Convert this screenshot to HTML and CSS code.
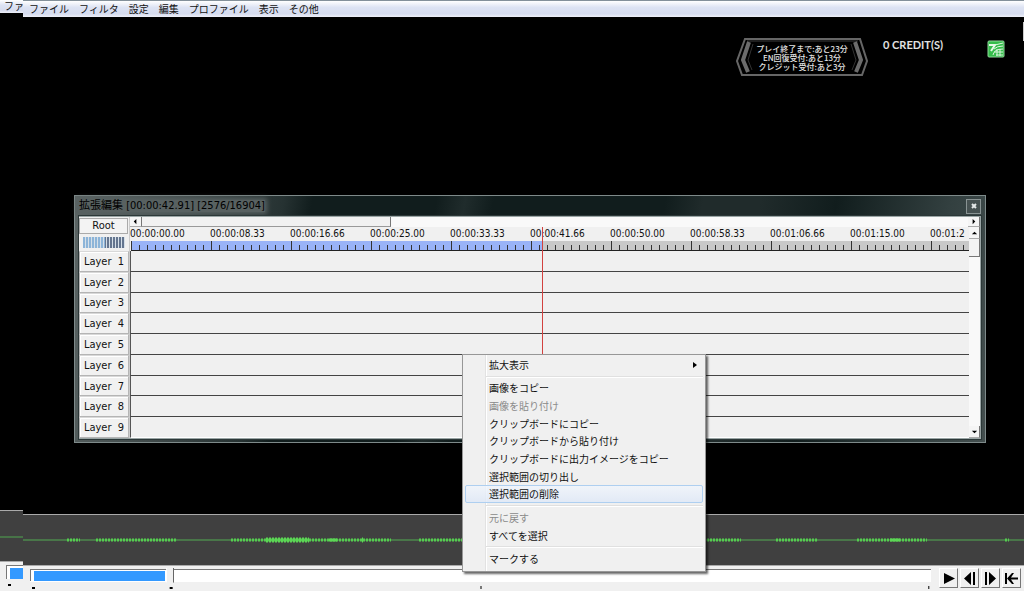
FILE: index.html
```html
<!DOCTYPE html>
<html lang="ja">
<head>
  <meta charset="UTF-8">
  <meta name="viewport" content="width=device-width, initial-scale=1.0">
  <title>拡張編集</title>
  <link rel="stylesheet" href="styles.css">
</head>
<body>
  <!-- window behind, only its left edge shows -->
  <div class="app app-back">
    <div class="menubar">ファ</div>
    <div class="stage"></div>
    <div class="wave">
      <svg viewBox="0 0 23 50" preserveAspectRatio="none"><path d="M0 26H23" stroke="#4fa64f"/></svg>
    </div>
    <div class="controls">
      <div class="seek">
        <div class="back-track"></div>
        <svg class="marks"><rect x="2" y="0" width="3" height="2"/></svg>
      </div>
    </div>
  </div>

  <div class="app app-main">
    <nav class="menubar">
      <a href="#file">ファイル</a>
      <a href="#filter">フィルタ</a>
      <a href="#settings">設定</a>
      <a href="#edit">編集</a>
      <a href="#profile">プロファイル</a>
      <a href="#view">表示</a>
      <a href="#other">その他</a>
    </nav>

    <main class="stage">
      <div class="hud">
        <div class="notice">
          <svg class="notice-frame" viewBox="0 0 132 39" fill="none">
            <path d="M9 1H124L131 23L126 37H6L1 23Z" stroke="#666" stroke-width="2"/>
            <path d="M11 3H122" stroke="#3c3c3c"/>
            <path d="M13 4L7 22L12 34M119 4L125 22L120 34" stroke="#6c6c6c" stroke-width="4"/>
            <path d="M17 6L12 22L16 32M115 6L120 22L116 32" stroke="#333"/>
          </svg>
          <p>プレイ終了まで:あと23分</p>
          <p>EN回復受付:あと13分</p>
          <p>クレジット受付:あと3分</p>
        </div>
        <span class="credit">0 CREDIT(S)</span>
        <svg class="card-icon" viewBox="0 0 18 18">
          <rect x="1" y="1" width="16" height="16" rx="1" fill="#35bd4b" stroke="#8fd79a"/>
          <path d="M2 5H8L4 11" stroke="#e4f8e6" stroke-width="2" fill="none"/>
          <path d="M8 5L16 3M7 9Q10 6 16 6M6 15Q7 9 16 9M7 12H16M10 9V16M13 9V16M9 15H16" stroke="#d9f5dc" fill="none"/>
        </svg>
        <i class="edge"></i>
      </div>
    </main>

    <div class="wave">
      <svg viewBox="0 0 1001 50" preserveAspectRatio="none" fill="none">
        <path d="M0 25H1001" stroke="#52ac52"/>
        <path d="M44 25H57M73 25H154M208 25H368M396 25H718M753 25H794M834 25H904M982 25H986" stroke="#55cc50" stroke-width="3" stroke-dasharray="2 1"/>
        <path d="M243 25H286" stroke="#5cd655" stroke-width="5" stroke-dasharray="2 1"/>
        <path d="M306 25H314M867 25H877" stroke="#5cd655" stroke-width="3"/>
        <path d="M339 25H340" stroke="#5cd655" stroke-width="5"/>
      </svg>
    </div>

    <div class="controls">
      <div class="seek">
        <input type="range" min="0" max="16904" value="2576" aria-label="フレーム位置" style="--pos: 15.24%">
        <svg class="marks">
          <rect x="2" y="1" width="3" height="2"/>
          <rect x="15.5%" y="1" width="3" height="2"/>
          <rect x="50%" y="0" width="1" height="3"/>
          <rect x="99.7%" y="0" width="1" height="3"/>
        </svg>
      </div>
      <div class="transport">
        <button type="button" aria-label="再生"><svg viewBox="0 0 15 15"><path d="M3 2L14 7.500L3 13Z"/></svg></button>
        <button type="button" aria-label="前のフレーム"><svg viewBox="0 0 15 15"><path d="M9 1V14L2 7.500ZM11 1H13V14H11Z"/></svg></button>
        <button type="button" aria-label="次のフレーム"><svg viewBox="0 0 15 15"><path d="M6 1V14L13 7.500ZM2 1H4V14H2Z"/></svg></button>
        <button type="button" aria-label="先頭へ"><svg viewBox="0 0 15 15"><path d="M1 2H3V13H1ZM3 7.500L8 2H10L7 6.500H14V8.500H7L10 13H8Z"/></svg></button>
      </div>
    </div>
  </div>

  <section class="timeline">
    <header class="titlebar">
      <h1>拡張編集 [00:00:42.91] [2576/16904]</h1>
      <button type="button" class="close" aria-label="閉じる"><svg viewBox="0 0 6 6"><path d="M1 1L5 5M5 1L1 5" stroke="#e4e8e8" stroke-width="2"/></svg></button>
    </header>
    <div class="editor">
      <div class="side">
        <div class="side-head">
          <button type="button" class="root">Root</button>
          <div class="zoom-meter"></div>
        </div>
        <button type="button" class="layer">Layer&nbsp; 1</button>
        <button type="button" class="layer">Layer&nbsp; 2</button>
        <button type="button" class="layer">Layer&nbsp; 3</button>
        <button type="button" class="layer">Layer&nbsp; 4</button>
        <button type="button" class="layer">Layer&nbsp; 5</button>
        <button type="button" class="layer">Layer&nbsp; 6</button>
        <button type="button" class="layer">Layer&nbsp; 7</button>
        <button type="button" class="layer">Layer&nbsp; 8</button>
        <button type="button" class="layer">Layer&nbsp; 9</button>
      </div>
      <div class="view">
        <div class="hscroll">
          <button type="button" aria-label="左へ"><svg viewBox="0 0 8 8"><path d="M5 1V7L2 4Z"/></svg></button>
          <div class="hthumb"></div>
          <button type="button" class="end" aria-label="右へ"><svg viewBox="0 0 8 8"><path d="M3 1V7L6 4Z"/></svg></button>
        </div>
        <div class="view-body">
          <div class="canvas">
            <div class="times">
              <span>00:00:00.00</span>
              <span>00:00:08.33</span>
              <span>00:00:16.66</span>
              <span>00:00:25.00</span>
              <span>00:00:33.33</span>
              <span>00:00:41.66</span>
              <span>00:00:50.00</span>
              <span>00:00:58.33</span>
              <span>00:01:06.66</span>
              <span>00:01:15.00</span>
              <span>00:01:2</span>
            </div>
            <div class="ruler"></div>
            <div class="track"></div>
            <div class="track"></div>
            <div class="track"></div>
            <div class="track"></div>
            <div class="track"></div>
            <div class="track"></div>
            <div class="track"></div>
            <div class="track"></div>
            <div class="track"></div>
            <div class="playhead"></div>
          </div>
          <div class="vscroll">
            <button type="button" aria-label="上へ"><svg viewBox="0 0 8 8"><path d="M1 6H7L4 3Z"/></svg></button>
            <div class="vthumb"></div>
            <button type="button" class="end" aria-label="下へ"><svg viewBox="0 0 8 8"><path d="M1 3H7L4 6Z"/></svg></button>
          </div>
        </div>
      </div>
    </div>
  </section>

  <div class="context-menu" role="menu">
    <button type="button" role="menuitem">拡大表示<svg viewBox="0 0 8 8"><path d="M2 1V7L6 4Z"/></svg></button>
    <hr>
    <button type="button" role="menuitem">画像をコピー</button>
    <button type="button" role="menuitem" disabled>画像を貼り付け</button>
    <button type="button" role="menuitem">クリップボードにコピー</button>
    <button type="button" role="menuitem">クリップボードから貼り付け</button>
    <button type="button" role="menuitem">クリップボードに出力イメージをコピー</button>
    <button type="button" role="menuitem">選択範囲の切り出し</button>
    <button type="button" role="menuitem" class="active">選択範囲の削除</button>
    <hr>
    <button type="button" role="menuitem" disabled>元に戻す</button>
    <button type="button" role="menuitem">すべてを選択</button>
    <hr>
    <button type="button" role="menuitem">マークする</button>
  </div>
</body>
</html>
```

FILE: styles.css
```css
* {
  box-sizing: border-box;
}
body {
  margin: 0;
  height: 100vh;
  display: flex;
  overflow: hidden;
  background: #000;
  color: #111;
  font-family: "DejaVu Sans Condensed", "Noto Sans CJK JP", sans-serif;
  font-size: 10px;
}
button {
  margin: 0;
  padding: 0;
  font: inherit;
  color: inherit;
}
svg {
  display: block;
}

/* main windows */
.app {
  display: flex;
  flex-direction: column;
  height: 100%;
}
.app-back {
  width: 23px;
  overflow: hidden;
}
.app-main {
  flex: 1;
  min-width: 0;
}
.menubar {
  display: flex;
  align-items: center;
  gap: 10px;
  height: 17px;
  padding: 0 6px;
  border-top: 1px solid #83909a;
  background: linear-gradient(#fff, #dde3f3 40%, #d6dcef 80%, #eef0f8);
  font-family: "Noto Sans CJK JP", sans-serif;
  line-height: 14px;
  white-space: nowrap;
}
.menubar a {
  color: #111;
  text-decoration: none;
}
.app-back .menubar {
  height: 13px;
  padding: 0 0 2px 4px;
  border-top: 0;
  line-height: 10px;
}
.stage {
  flex: 1;
  background: #000;
}
.hud {
  display: flex;
  justify-content: flex-end;
  align-items: flex-start;
  padding-top: 5px;
}
.notice {
  position: relative;
  width: 132px;
  height: 39px;
  margin-top: 16px;
  padding-top: 6px;
  color: #e4e4e4;
  font-family: "Noto Sans CJK JP", sans-serif;
  font-size: 8px;
  font-weight: 500;
  line-height: 9px;
  text-align: center;
}
.notice p {
  position: relative;
  margin: 0;
}
.notice-frame {
  position: absolute;
  inset: 0;
}
.credit {
  width: 104px;
  margin: 15px 0 0 15px;
  color: #e2e2e2;
  font: bold 11px/15px Lato, sans-serif;
}
.card-icon {
  width: 18px;
  height: 18px;
  margin: 18px 18px 0 0;
}
.edge {
  width: 1px;
  height: 19px;
  background: #ccc;
}
.wave {
  height: 52px;
  background: #404040;
  border-top: 1px solid #aaa;
  border-bottom: 1px solid #aaa;
}
.wave svg {
  width: 100%;
  height: 50px;
}
.controls {
  display: flex;
  height: 25px;
  padding: 2px 3px 0 7px;
  background: #f0f0f0;
}
.app-back .controls {
  height: 29px;
  padding: 3px 0 0 6px;
}
.seek {
  flex: 1;
}
.back-track {
  height: 14px;
  border: solid #777;
  border-width: 1px 0 0 1px;
  background: #3399ff;
  box-shadow: inset 3px 2px #fff;
}
.app-back .marks {
  margin-top: 5px;
}
.seek input {
  -webkit-appearance: none;
  appearance: none;
  display: block;
  width: 100%;
  height: 18px;
  margin: 0;
  border: 0;
  background:
    linear-gradient(#3399ff, #3399ff) 4px 3px / calc(var(--pos) - 6px) 10px no-repeat,
    linear-gradient(#777, #777) 0 1px / 100% 1px no-repeat,
    linear-gradient(#777, #777) 0 1px / 1px 12px no-repeat,
    linear-gradient(#fff, #fff) 0 1px / 100% 13px no-repeat;
}
.seek input::-webkit-slider-thumb {
  -webkit-appearance: none;
  width: 8px;
  height: 18px;
  background: linear-gradient(90deg, #fff 1px, #f0f0f0 1px, #f0f0f0 7px, #666 7px);
  clip-path: polygon(0 0, 100% 0, 100% 78%, 50% 100%, 0 78%);
}
.marks {
  width: 100%;
  height: 4px;
}
.transport {
  display: flex;
  gap: 2px;
  margin-left: 8px;
}
.transport button {
  width: 19px;
  height: 20px;
  padding: 1px;
  border: 1px solid #fff;
  border-right-color: #777;
  border-bottom-color: #777;
  background: #f0f0f0;
}
.transport svg {
  width: 15px;
  height: 15px;
}

/* floating timeline window */
.timeline {
  position: absolute;
  top: 195px;
  left: 74px;
  right: 38px;
  height: 248px;
  display: flex;
  flex-direction: column;
  padding: 0 4px 3px;
  border: 1px solid #7e8a8a;
  background: linear-gradient(100deg, #5b6464, #414b4b 12%, #263232 22%, #111d1d 25%, #111d1d 38%, #202c2c 41%, #111d1d 44%, #111d1d 62%, #202b2b 66%, #202b2b 72%, #111d1d 80%, #334040 92%, #444f4f);
}
.titlebar {
  display: flex;
  align-items: center;
  justify-content: space-between;
  height: 20px;
}
.titlebar h1 {
  margin: 0;
  font-size: 11px;
  font-weight: normal;
  color: #000;
  background: #586161;
  box-shadow: 0 0 5px 2px #586161;
  line-height: 12px;
}
.close {
  display: grid;
  place-items: center;
  width: 15px;
  height: 15px;
  border: 1px solid #899393;
  background: #465151;
}
.close svg {
  width: 6px;
  height: 6px;
}
.editor {
  flex: 1;
  display: flex;
  min-height: 0;
  border: 1px solid #9aa5a5;
  border-left-width: 0;
  background: #f0f0f0;
  outline: 1px solid #2c3838;
}
.side {
  display: flex;
  flex-direction: column;
  width: 51px;
  border-right: 1px solid #ccc;
  font-size: 11px;
}
.side-head {
  height: 34px;
  padding-top: 1px;
}
.root {
  display: block;
  width: 49px;
  height: 16px;
  border: 1px solid #aaa;
  background: #f3f3f3;
  line-height: 14px;
}
.zoom-meter {
  width: 42px;
  height: 11px;
  margin: 3px 0 0 4px;
  background:
    repeating-linear-gradient(90deg, transparent 0 2px, #d5dfe8 2px 3px),
    linear-gradient(90deg, #8cb4d8 22px, #64758f 22px);
}
.layer {
  flex: 1;
  min-height: 0;
  border: 1px solid #b5b5b5;
  border-top-color: #d8d8d8;
  background: #f1f1f1;
  box-shadow: inset 1px 1px #fff;
}
.view {
  flex: 1;
  min-width: 0;
  display: flex;
  flex-direction: column;
}
.hscroll {
  display: flex;
  height: 10px;
  background: #f9f9f9;
}
.hscroll button,
.vscroll button {
  display: grid;
  place-items: center;
  width: 12px;
  height: 10px;
  border: 0;
  border-right: 1px solid #777;
  border-bottom: 1px solid #aaa;
  background: #f5f5f5;
}
.hscroll svg,
.vscroll svg {
  width: 7px;
  height: 7px;
}
.hscroll .end {
  margin-left: auto;
}
.hthumb {
  width: 249px;
  border-right: 1px solid #777;
  border-bottom: 1px solid #999;
  background: #f1f1f1;
}
.view-body {
  flex: 1;
  display: flex;
  min-height: 0;
}
.canvas {
  position: relative;
  flex: 1;
  min-width: 0;
  display: flex;
  flex-direction: column;
  overflow: hidden;
}
.times {
  display: flex;
  height: 14px;
  line-height: 14px;
}
.times span {
  flex: none;
  width: 80px;
}
.times span:last-child {
  width: auto;
}
.ruler {
  height: 10px;
  margin-left: 1px;
  border-bottom: 1px solid #222;
  background:
    repeating-linear-gradient(90deg, #333 0 1px, transparent 1px 80px),
    repeating-linear-gradient(90deg, #333 0 1px, transparent 1px 8px) 0 100% / 100% 5px no-repeat,
    linear-gradient(90deg, #99b3f7 412px, #c8c8c8 412px);
}
.track {
  flex: 1;
  border-left: 1px solid #555;
  border-bottom: 1px solid #444;
}
.track:nth-last-child(2) {
  border-bottom-color: #fff;
}
.playhead {
  position: absolute;
  top: 0;
  bottom: 0;
  left: 412px;
  width: 1px;
  background: #d2413f;
}
.vscroll {
  display: flex;
  flex-direction: column;
  width: 11px;
  background: #f9f9f9;
}
.vscroll button {
  width: 11px;
  height: 12px;
}
.vscroll .end {
  margin-top: auto;
}
.vthumb {
  height: 18px;
  border-right: 1px solid #777;
  border-bottom: 1px solid #777;
  background: #f3f3f3;
}

/* right click menu */
.context-menu {
  position: absolute;
  top: 354px;
  left: 462px;
  width: 244px;
  height: 218px;
  display: flex;
  flex-direction: column;
  padding: 1px 2px 3px;
  border: 1px solid #979797;
  background: linear-gradient(90deg, transparent 22px, #e2e2e2 22px, #e2e2e2 23px, #fff 23px, #fff 24px, transparent 24px) #f0f0f0;
  box-shadow: 2px 2px 2px rgba(0, 0, 0, 0.6);
  font-family: "Noto Sans CJK JP", sans-serif;
}
.context-menu button {
  flex: 1;
  min-height: 0;
  display: flex;
  align-items: center;
  justify-content: space-between;
  padding: 0 3px 0 23px;
  border: 1px solid transparent;
  border-radius: 2px;
  background: none;
  line-height: 14px;
  text-align: left;
}
.context-menu button:disabled {
  color: #8a8a8a;
}
.context-menu .active {
  border-color: #aecff0;
  background: linear-gradient(rgba(240, 245, 252, 0.8), rgba(222, 232, 247, 0.8));
}
.context-menu svg {
  width: 8px;
  height: 8px;
}
.context-menu hr {
  width: 217px;
  height: 2px;
  margin: 2px 0 2px auto;
  border: 0;
  border-top: 1px solid #e0e0e0;
  background: #fff;
}
```
